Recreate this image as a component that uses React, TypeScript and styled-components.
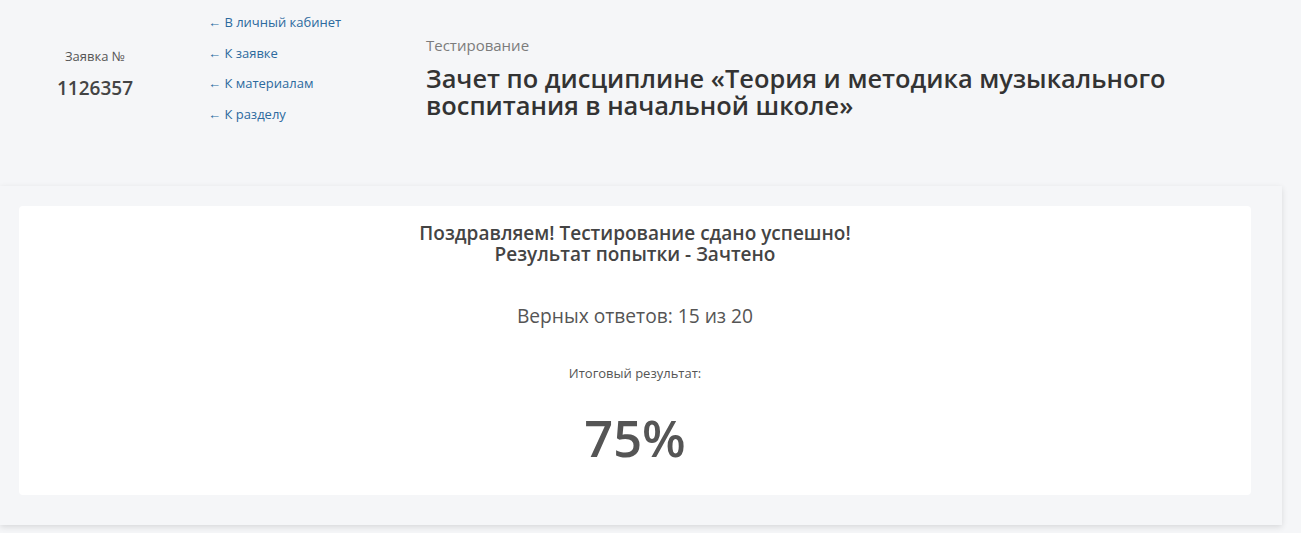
import React from "react";
import styled, { createGlobalStyle } from "styled-components";

const GlobalStyle = createGlobalStyle`
  html, body {
    margin: 0;
    padding: 0;
    background: #f5f6f8;
    font-family: "Open Sans", "Noto Sans", sans-serif;
    color: #444;
  }
  * { box-sizing: border-box; }
`;

const Page = styled.div`
  width: 1301px;
  min-height: 533px;
  background: #f5f6f8;
  overflow: hidden;
`;

const Header = styled.header`
  display: flex;
  align-items: flex-start;
  height: 186px;
`;

const OrderBlock = styled.div`
  width: 190px;
  display: flex;
  flex-direction: column;
  align-items: center;
  padding-top: 46px;
`;

const OrderLabel = styled.div`
  font-size: 13px;
  line-height: 20px;
  color: #555;
`;

const OrderNumber = styled.div`
  margin-top: 9px;
  font-size: 19px;
  line-height: 26px;
  font-weight: 600;
  color: #444;
`;

const Nav = styled.nav`
  width: 218px;
  margin-left: 18px;
  display: flex;
  flex-direction: column;
  gap: 10.7px;
  padding-top: 12px;
`;

const NavLink = styled.a`
  font-size: 13px;
  line-height: 20px;
  color: #2c6a9e;
  text-decoration: none;
  white-space: nowrap;
`;

const TitleBlock = styled.div`
  padding-top: 34px;
  flex: 1;
`;

const Kind = styled.div`
  font-size: 15px;
  line-height: 22px;
  color: #7c7c7c;
`;

const Title = styled.h1`
  margin: 9px 0 0;
  font-size: 25.4px;
  line-height: 27px;
  font-weight: 600;
  color: #333;
  max-width: 800px;
`;

const Panel = styled.section`
  width: 1282px;
  padding: 20px 31px 30px 19px;
  background: #f5f6f8;
  box-shadow: 0 2px 6px rgba(0, 0, 0, 0.12);
`;

const Card = styled.div`
  background: #fff;
  border-radius: 4px;
  height: 289px;
  display: flex;
  flex-direction: column;
  align-items: center;
  padding-top: 17px;
  text-align: center;
`;

const Congrats = styled.div`
  font-size: 19px;
  line-height: 21px;
  font-weight: 600;
  color: #444;
`;

const Answers = styled.div`
  margin-top: 38px;
  font-size: 19.2px;
  line-height: 26px;
  color: #555;
`;

const ResultLabel = styled.div`
  margin-top: 35px;
  font-size: 13px;
  line-height: 18px;
  color: #555;
`;

const Percent = styled.div`
  margin-top: 26px;
  font-size: 50.5px;
  line-height: 60px;
  font-weight: 600;
  color: #555;
`;

export default function App() {
  return (
    <>
      <GlobalStyle />
      <Page>
        <Header>
          <OrderBlock>
            <OrderLabel>Заявка №</OrderLabel>
            <OrderNumber>1126357</OrderNumber>
          </OrderBlock>
          <Nav>
            <NavLink href="#">← В личный кабинет</NavLink>
            <NavLink href="#">← К заявке</NavLink>
            <NavLink href="#">← К материалам</NavLink>
            <NavLink href="#">← К разделу</NavLink>
          </Nav>
          <TitleBlock>
            <Kind>Тестирование</Kind>
            <Title>Зачет по дисциплине «Теория и методика музыкального воспитания в начальной школе»</Title>
          </TitleBlock>
        </Header>
        <Panel>
          <Card>
            <Congrats>
              Поздравляем! Тестирование сдано успешно!
              <br />
              Результат попытки - Зачтено
            </Congrats>
            <Answers>Верных ответов: 15 из 20</Answers>
            <ResultLabel>Итоговый результат:</ResultLabel>
            <Percent>75%</Percent>
          </Card>
        </Panel>
      </Page>
    </>
  );
}
